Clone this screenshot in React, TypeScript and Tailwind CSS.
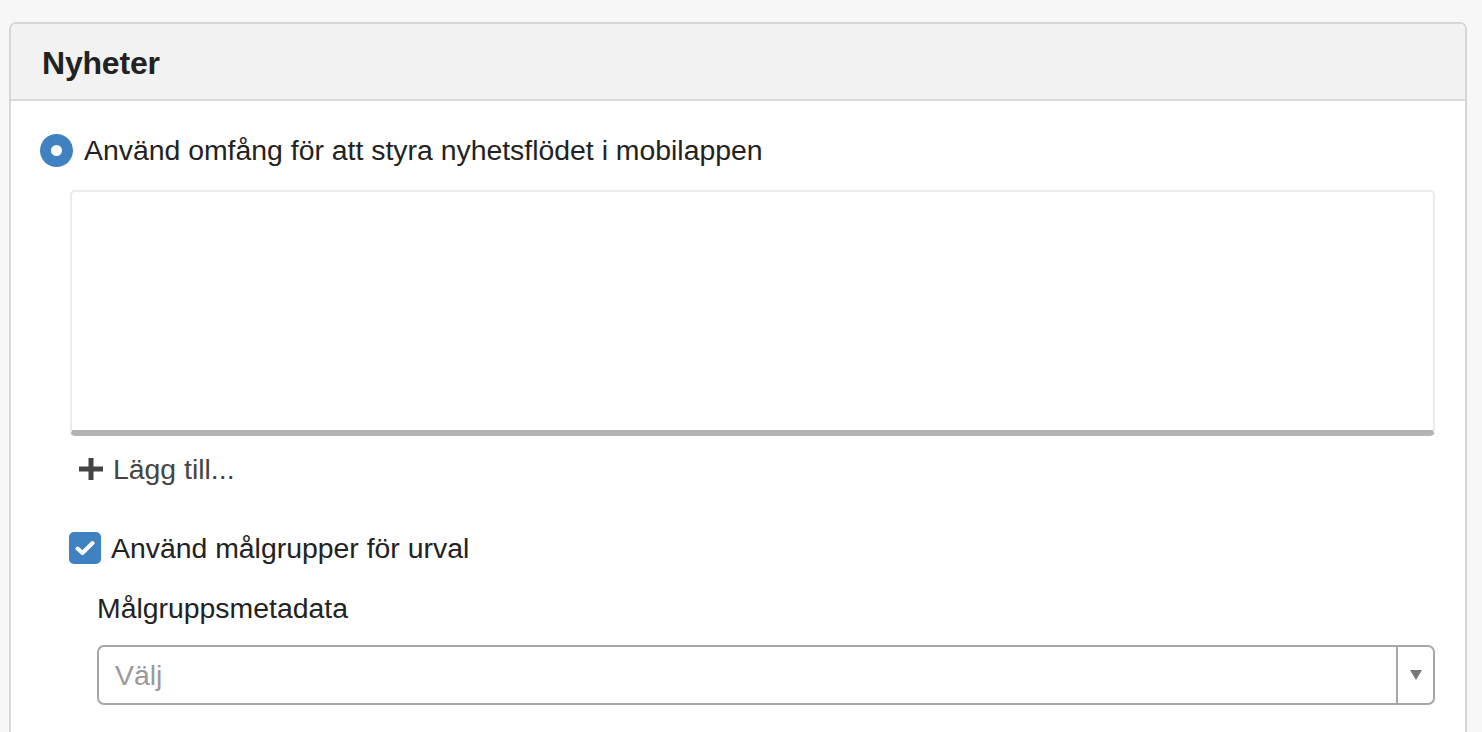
import React from 'react'

const font = { fontFamily: '"Liberation Sans", Arial, sans-serif' }

export default function App() {
  return (
    <div className="min-h-screen bg-[#f7f7f7] pt-[22px] pl-[9px] pr-[15px]" style={font}>
      <div className="rounded-t-[7px] border-2 border-b-0 border-[#d6d6d6] bg-white h-[720px] overflow-hidden">
        {/* Header */}
        <div className="h-[77px] bg-[#f2f2f2] border-b-2 border-[#dadada] flex items-center pl-[31px] pt-[2px]">
          <h2 className="text-[32px] font-bold text-[#222] tracking-[-0.2px]">Nyheter</h2>
        </div>

        {/* Body */}
        <div className="pl-[29px] pr-[30px] pt-[32px]">
          <label className="flex items-center gap-[11px] h-[34px]">
            <span className="w-[33px] h-[33px] rounded-full bg-[#3f81c1] flex items-center justify-center">
              <span className="w-[11px] h-[11px] rounded-full bg-white" />
            </span>
            <span className="text-[28.4px] text-[#222]">Använd omfång för att styra nyhetsflödet i mobilappen</span>
          </label>

          <div className="ml-[30px] mt-[23px]">
            <div className="h-[246px] rounded-[5px] border-2 border-[#ebebeb] border-b-[6px] border-b-[#b3b3b3] bg-white" />

            <button className="flex items-center gap-[10px] mt-[12px] ml-[9px] text-[#444] text-[28.4px]">
              <svg width="24" height="22" viewBox="0 0 24 22">
                <rect x="0" y="8.5" width="24" height="5" fill="#444" />
                <rect x="9.5" y="0" width="5" height="22" fill="#444" />
              </svg>
              <span>Lägg till...</span>
            </button>

            <label className="flex items-center gap-[10px] mt-[36px] -ml-px">
              <span className="w-[32px] h-[32px] rounded-[5px] bg-[#3f81c1] flex items-center justify-center">
                <svg width="20" height="16" viewBox="0 0 20 16">
                  <path d="M2.5 8.5 L7.5 13 L17.5 3" fill="none" stroke="white" strokeWidth="4" strokeLinecap="round" strokeLinejoin="round" />
                </svg>
              </span>
              <span className="text-[28.4px] text-[#222]">Använd målgrupper för urval</span>
            </label>

            <div className="ml-[27px] mt-[22px]">
              <div className="text-[28.4px] text-[#222] leading-[34px]">Målgruppsmetadata</div>
              <div className="mt-[20px] h-[60px] rounded-[7px] border-2 border-[#a6a6a6] flex bg-white">
                <div className="flex-1 flex items-center pl-[16px] text-[28.4px] text-[#999]">Välj</div>
                <div className="w-[37px] border-l-2 border-[#a6a6a6] flex items-center justify-center">
                  <svg width="12" height="10" viewBox="0 0 12 10">
                    <path d="M0 0 H12 L6 10 Z" fill="#777" />
                  </svg>
                </div>
              </div>
            </div>
          </div>
        </div>
      </div>
    </div>
  )
}
